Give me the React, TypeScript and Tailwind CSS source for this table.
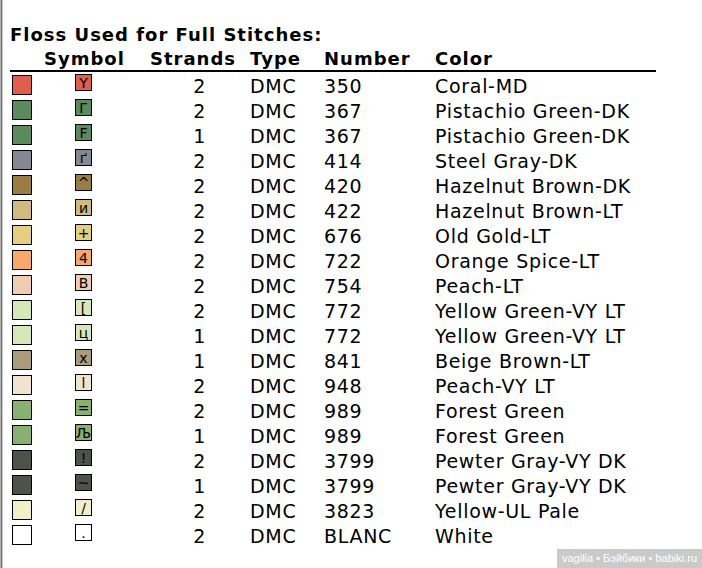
import React from "react";

type Floss = {
  color: string;
  symbol: string;
  strands: number;
  number: string;
  name: string;
};

const flosses: Floss[] = [
  { color: "#e15e4e", symbol: "Y", strands: 2, number: "350", name: "Coral-MD" },
  { color: "#5b8a5f", symbol: "Г", strands: 2, number: "367", name: "Pistachio Green-DK" },
  { color: "#5b8a5f", symbol: "F", strands: 1, number: "367", name: "Pistachio Green-DK" },
  { color: "#858890", symbol: "ґ", strands: 2, number: "414", name: "Steel Gray-DK" },
  { color: "#9a7d45", symbol: "^", strands: 2, number: "420", name: "Hazelnut Brown-DK" },
  { color: "#d0ba7f", symbol: "и", strands: 2, number: "422", name: "Hazelnut Brown-LT" },
  { color: "#e4cf80", symbol: "+", strands: 2, number: "676", name: "Old Gold-LT" },
  { color: "#f7a86a", symbol: "4", strands: 2, number: "722", name: "Orange Spice-LT" },
  { color: "#f0cdb0", symbol: "B", strands: 2, number: "754", name: "Peach-LT" },
  { color: "#d6e8b7", symbol: "[", strands: 2, number: "772", name: "Yellow Green-VY LT" },
  { color: "#d6e8b7", symbol: "ц", strands: 1, number: "772", name: "Yellow Green-VY LT" },
  { color: "#a99b7b", symbol: "x", strands: 1, number: "841", name: "Beige Brown-LT" },
  { color: "#f1e3cf", symbol: "l", strands: 2, number: "948", name: "Peach-VY LT" },
  { color: "#88b06e", symbol: "=", strands: 2, number: "989", name: "Forest Green" },
  { color: "#88b06e", symbol: "Љ", strands: 1, number: "989", name: "Forest Green" },
  { color: "#4d5349", symbol: "!", strands: 2, number: "3799", name: "Pewter Gray-VY DK" },
  { color: "#4d5349", symbol: "~", strands: 1, number: "3799", name: "Pewter Gray-VY DK" },
  { color: "#f0efc9", symbol: "/", strands: 2, number: "3823", name: "Yellow-UL Pale" },
  { color: "#ffffff", symbol: ".", strands: 2, number: "BLANC", name: "White" },
];

const cols = "grid grid-cols-[65px_75px_100px_74px_111px_1fr]";

export default function App() {
  return (
    <div className="relative h-[568px] w-[702px] overflow-hidden bg-white text-black font-['DejaVu_Sans','Verdana',sans-serif]">
      <div className="flex h-full border-l border-[#b4b4b4]">
        <div className="flex h-full w-full border-l border-[#6f6f6f]">
          <div className="h-full w-full border-l border-[#c8c8c8] pl-[7px] pt-[22px]">
            <div className="whitespace-nowrap text-[18px] font-bold leading-[25px] tracking-[1px]">
              Floss Used for Full Stitches:
            </div>

            <div className="w-[646px]">
              <div className={`${cols} border-b-2 border-black text-[18px] font-bold leading-[23px] tracking-[1px]`}>
                <div className="col-span-2 pl-[34px]">Symbol</div>
                <div>Strands</div>
                <div>Type</div>
                <div>Number</div>
                <div>Color</div>
              </div>

              {flosses.map((f, i) => (
                <div key={i} className={`${cols} h-[25px] text-[19px] leading-[28px] tracking-[0.7px]`}>
                  <div className="pl-[2px] pt-[3px]">
                    <div className="h-[20px] w-[20px] border border-black" style={{ backgroundColor: f.color }} />
                  </div>
                  <div className="pt-[2px]">
                    <div
                      className="flex h-[17px] w-[17px] items-center justify-center border border-black text-[14px] leading-none tracking-normal"
                      style={{ backgroundColor: f.color }}
                    >
                      {f.symbol}
                    </div>
                  </div>
                  <div className="pr-[44px] text-right">{f.strands}</div>
                  <div>DMC</div>
                  <div>{f.number}</div>
                  <div className="whitespace-nowrap">{f.name}</div>
                </div>
              ))}
            </div>
          </div>
        </div>
      </div>

      <div className="absolute bottom-0 right-0 flex h-[19px] w-[145px] items-center justify-center whitespace-nowrap bg-[#cacaca] font-['Liberation_Sans',Arial,sans-serif] text-[11px] text-white">
        vagilia • Бэйбики • babiki.ru
      </div>
    </div>
  );
}
